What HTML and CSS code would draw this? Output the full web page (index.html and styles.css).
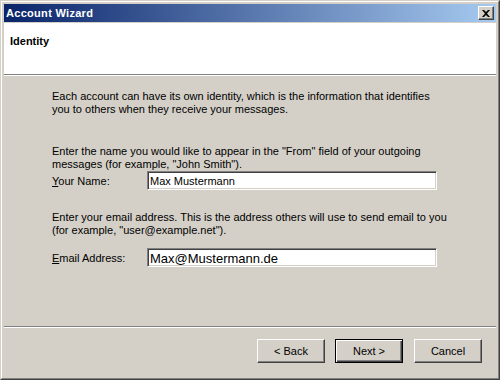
FILE: index.html
```html
<!DOCTYPE html>
<html lang="en">
<head>
  <meta charset="UTF-8" />
  <title>Account Wizard</title>
  <link rel="stylesheet" href="styles.css">
</head>
<body>
  <div class="window">
    <div class="frame">
      <div class="titlebar">
        <span class="title">Account Wizard</span>
        <button class="close" title="Close">
          <svg width="8" height="7" viewBox="0 0 8 7"><path d="M0 0h2l2 2 2-2h2L5 3.5 8 7H6L4 5 2 7H0l3-3.5z" fill="#000"/></svg>
        </button>
      </div>

      <div class="header">Identity</div>

      <div class="content">
        <p>Each account can have its own identity, which is the information that identifies<br>you to others when they receive your messages.</p>

        <p>Enter the name you would like to appear in the "From" field of your outgoing<br>messages (for example, "John Smith").</p>
        <div class="row">
          <label for="name"><u>Y</u>our Name:</label>
          <input id="name" class="field" type="text" value="Max Mustermann">
        </div>

        <p class="third">Enter your email address. This is the address others will use to send email to you<br>(for example, "user@example.net").</p>
        <div class="row email">
          <label for="email"><u>E</u>mail Address:</label>
          <input id="email" class="field big" type="text" value="Max@Mustermann.de">
        </div>
      </div>

      <div class="separator"></div>

      <div class="footer">
        <button class="btn">&lt; Back</button>
        <button class="btn default">Next &gt;</button>
        <button class="btn">Cancel</button>
      </div>
    </div>
  </div>
</body>
</html>
```

FILE: styles.css
```css
body {
  margin: 0;
  font-family: 'Liberation Sans', Arial, sans-serif;
  font-size: 11px;
  color: #000;
  background: #d4d0c8;
}
.window {
  width: 500px;
  height: 380px;
  box-sizing: border-box;
  border: 1px solid;
  border-color: #d4d0c8 #404040 #404040 #d4d0c8;
}
.frame {
  height: 100%;
  box-sizing: border-box;
  border: 1px solid;
  border-color: #fff #808080 #808080 #fff;
  padding: 2px;
  display: flex;
  flex-direction: column;
  background: #d4d0c8;
}

/* Title bar */
.titlebar {
  height: 18px;
  display: flex;
  align-items: center;
  justify-content: space-between;
  padding: 0 2px;
  background: linear-gradient(to right, #0a246a, #a6caf0);
}
.title {
  color: #fff;
  font-weight: bold;
  font-size: 11px;
  letter-spacing: 0.3px;
}
.close {
  width: 16px;
  height: 14px;
  padding: 0;
  display: flex;
  align-items: center;
  justify-content: center;
  background: #d4d0c8;
  border: 1px solid;
  border-color: #fff #404040 #404040 #fff;
  box-shadow: inset -1px -1px 0 #808080;
}

/* Header */
.header {
  margin-top: 1px;
  height: 52px;
  background: #fff;
  border-bottom: 1px solid #808080;
  padding: 12px 0 0 6px;
  box-sizing: border-box;
  font-weight: bold;
}

/* Content */
.content {
  flex: 1;
  border-top: 1px solid #fff;
  padding: 14px 0 0 48px;
}
.content p {
  margin: 0 0 29px;
  line-height: 13px;
}
.content p.third {
  margin-bottom: 11px;
}
.row {
  display: flex;
  align-items: center;
  margin: -29px 0 21px;
}
.row.email {
  margin: 0;
}
.row label {
  width: 95px;
}
.field {
  width: 290px;
  height: 19px;
  box-sizing: border-box;
  margin: 0;
  padding: 1px 2px 0;
  font-family: 'Liberation Sans', Arial, sans-serif;
  font-size: 11px;
  background: #fff;
  border: 1px solid;
  border-color: #808080 #fff #fff #808080;
  box-shadow: inset 1px 1px 0 #404040, inset -1px -1px 0 #d4d0c8;
  outline: none;
}
.field.big {
  font-size: 13px;
}

/* Footer */
.separator {
  border-top: 1px solid #808080;
  border-bottom: 1px solid #fff;
}
.footer {
  height: 48px;
  box-sizing: border-box;
  display: flex;
  justify-content: flex-end;
  gap: 10px;
  padding: 11px 14px 0 0;
}
.btn {
  width: 68px;
  height: 24px;
  margin: 0;
  font-family: 'Liberation Sans', Arial, sans-serif;
  font-size: 11px;
  color: #000;
  background: #d4d0c8;
  border: 1px solid;
  border-color: #fff #404040 #404040 #fff;
  box-shadow: inset -1px -1px 0 #808080;
}
.btn.default {
  margin-right: 1px;
  border: 1px solid #000;
  box-shadow: inset 1px 1px 0 #fff, inset -1px -1px 0 #404040, inset -2px -2px 0 #808080;
}
```
